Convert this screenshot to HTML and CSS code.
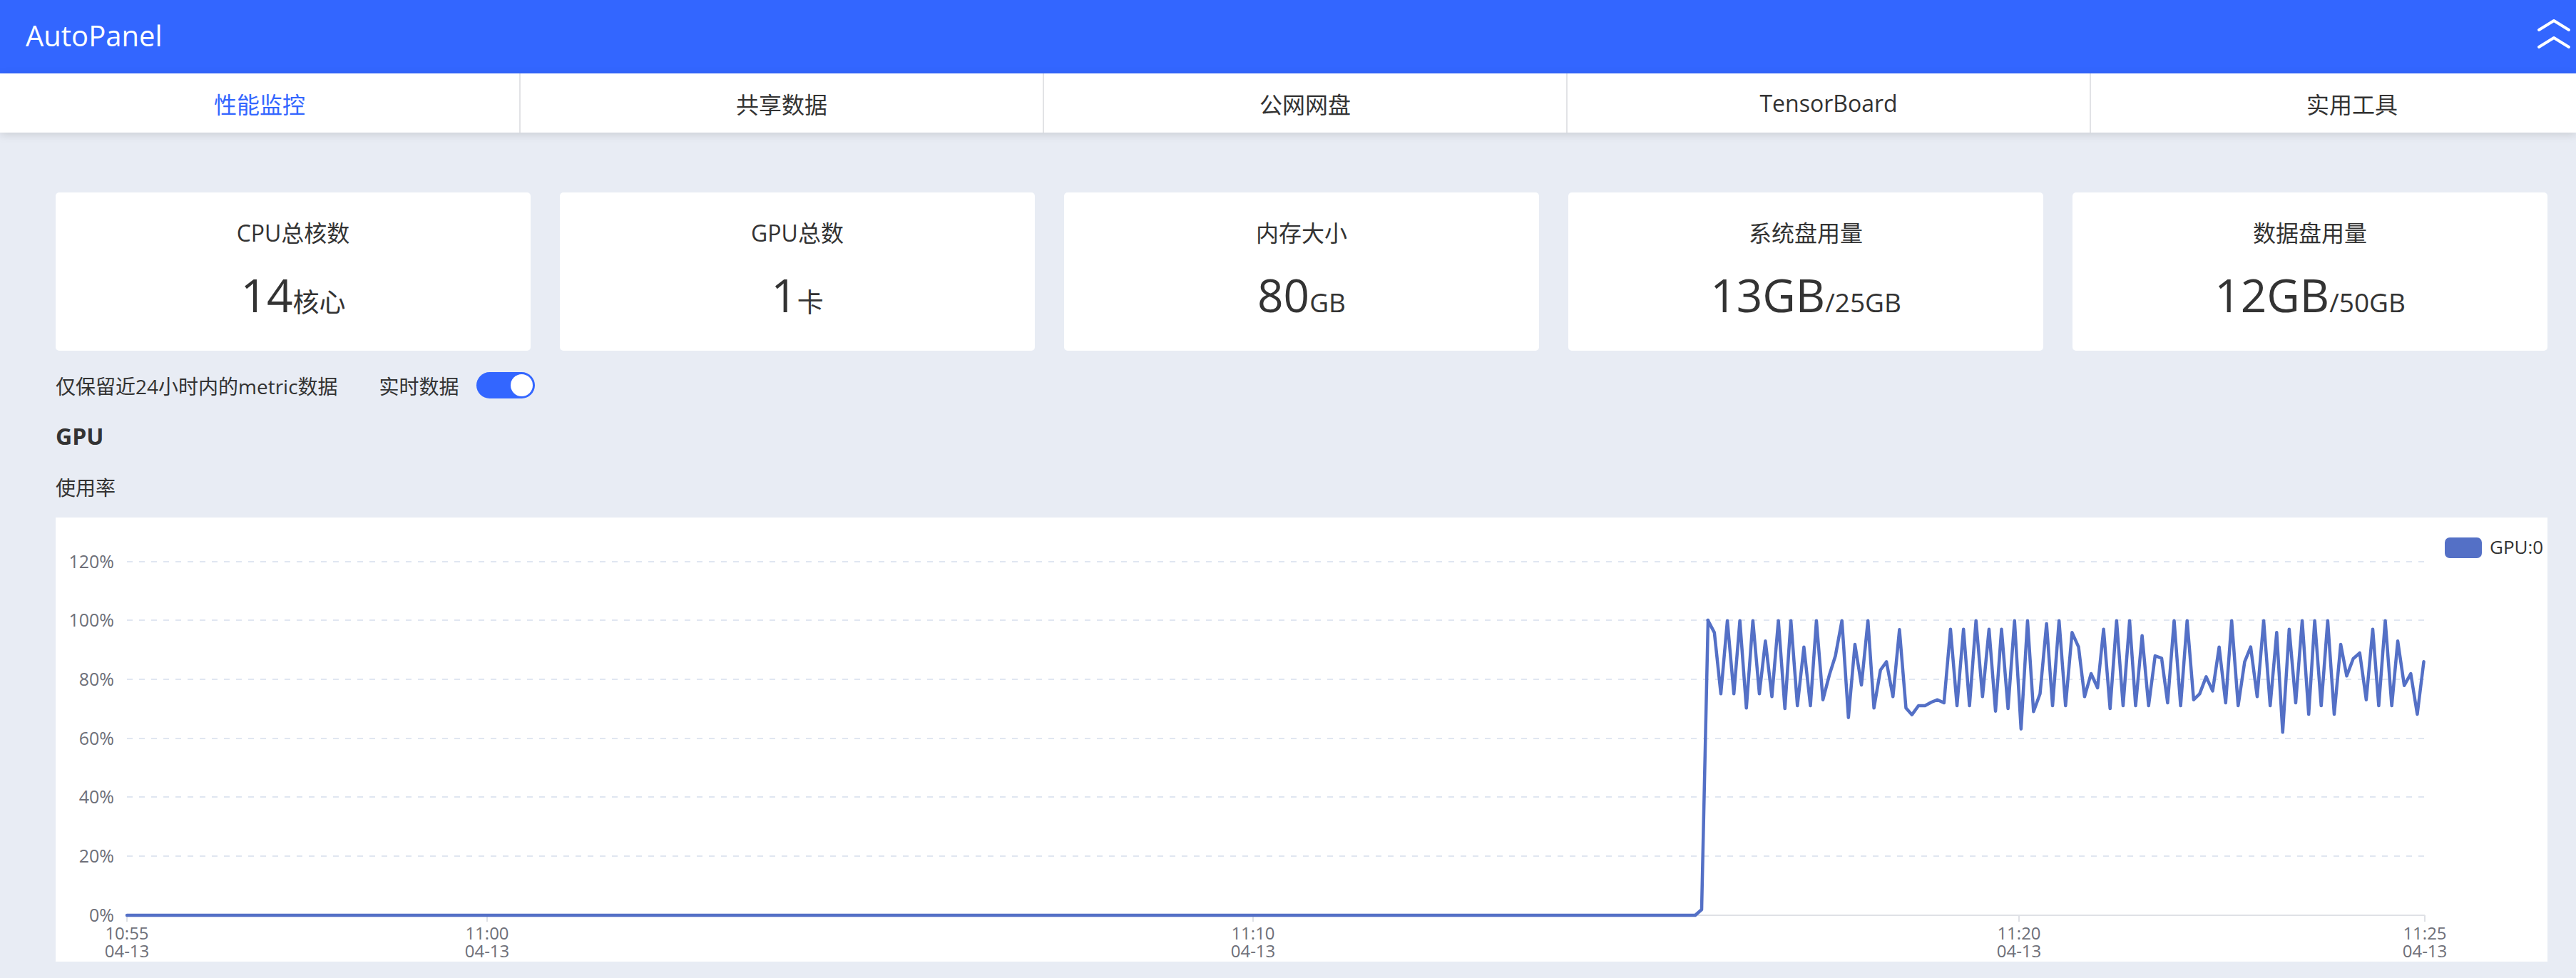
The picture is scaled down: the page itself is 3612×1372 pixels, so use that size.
FILE: index.html
```html
<!DOCTYPE html>
<html lang="zh">
<head>
<meta charset="utf-8">
<title>AutoPanel</title>
<link rel="stylesheet" href="styles.css">
</head>
<body>
<header class="topbar">
  <div class="brand">AutoPanel</div>
  <svg class="collapse" width="56" height="103" viewBox="3556 0 56 103">
    <polyline points="3560,42 3581,29 3602,42" fill="none" stroke="#fff" stroke-width="4" stroke-linecap="round" stroke-linejoin="round"/>
    <polyline points="3560,66 3581,53 3602,66" fill="none" stroke="#fff" stroke-width="4" stroke-linecap="round" stroke-linejoin="round"/>
  </svg>
</header>
<nav class="tabs">
  <div class="tab tab-first active">性能监控</div>
  <div class="tab">共享数据</div>
  <div class="tab">公网网盘</div>
  <div class="tab">TensorBoard</div>
  <div class="tab">实用工具</div>
</nav>
<main class="main">
  <section class="cards">
    <div class="card"><div class="card-title">CPU总核数</div><div class="card-value">14<span class="unit">核心</span></div></div>
    <div class="card"><div class="card-title">GPU总数</div><div class="card-value">1<span class="unit">卡</span></div></div>
    <div class="card"><div class="card-title">内存大小</div><div class="card-value">80<span class="unit">GB</span></div></div>
    <div class="card"><div class="card-title">系统盘用量</div><div class="card-value">13GB<span class="unit">/25GB</span></div></div>
    <div class="card"><div class="card-title">数据盘用量</div><div class="card-value">12GB<span class="unit">/50GB</span></div></div>
  </section>
  <div class="controls">
    <span class="note">仅保留近24小时内的metric数据</span>
    <span class="live-label">实时数据</span>
    <span class="switch"><span class="knob"></span></span>
  </div>
  <h2 class="section-title">GPU</h2>
  <div class="sub-title">使用率</div>
  <div class="chart">
    <svg width="3494" height="623" viewBox="78 726 3494 623">
      <g class="grid">
        <line x1="178" y1="788" x2="3400" y2="788"/>
        <line x1="178" y1="870" x2="3400" y2="870"/>
        <line x1="178" y1="953" x2="3400" y2="953"/>
        <line x1="178" y1="1036" x2="3400" y2="1036"/>
        <line x1="178" y1="1118" x2="3400" y2="1118"/>
        <line x1="178" y1="1201" x2="3400" y2="1201"/>
      </g>
      <g class="axis">
        <line x1="178" y1="1284" x2="3400" y2="1284"/>
        <line x1="178" y1="1284" x2="178" y2="1293"/>
        <line x1="683" y1="1284" x2="683" y2="1293"/>
        <line x1="1757" y1="1284" x2="1757" y2="1293"/>
        <line x1="2831" y1="1284" x2="2831" y2="1293"/>
        <line x1="3400" y1="1284" x2="3400" y2="1293"/>
      </g>
      <g class="ylabels">
        <text x="160" y="797">120%</text>
        <text x="160" y="879">100%</text>
        <text x="160" y="962">80%</text>
        <text x="160" y="1045">60%</text>
        <text x="160" y="1127">40%</text>
        <text x="160" y="1210">20%</text>
        <text x="160" y="1293">0%</text>
      </g>
      <polyline class="series" points="178,1284 2377,1284 2386,1276 2395,870"/>
      <polyline class="series" transform="matrix(0.7015 0 0 0.33333 2300 800)" points="135,210 148,262 161,520 174,212 187,520 199,212 212,580 225,212 238,520 250,298 263,532 276,212 289,582 301,212 314,570 327,323 340,570 352,212 365,545 378,440 390,360 403,212 416,620 429,312 442,483 455,212 467,580 480,420 492,385 505,532 518,250 531,580 543,608 556,570 569,570 582,555 594,545 607,558 620,248 633,570 646,248 658,570 671,212 684,532 697,248 710,593 722,248 735,582 748,212 761,668 774,212 786,595 799,520 812,225 824,570 837,212 850,570 863,262 876,323 888,532 901,435 914,495 926,248 939,582 952,212 965,570 978,212 990,570 1003,275 1016,570 1029,360 1042,370 1054,558 1067,212 1080,570 1093,212 1106,545 1118,520 1131,448 1144,508 1157,323 1170,558 1182,212 1195,570 1208,385 1220,323 1233,532 1246,212 1259,570 1272,262 1284,682 1297,248 1310,558 1323,212 1336,606 1348,212 1361,570 1374,212 1387,606 1400,312 1412,445 1425,372 1438,348 1451,545 1464,248 1476,570 1489,212 1502,570 1514,298 1527,485 1540,435 1553,606 1566,385"/>
      <rect class="legend-key" x="3428" y="754" width="52" height="29" rx="7"/>
      <text class="legend-text" x="3491" y="777">GPU:0</text>
    </svg>
    <div class="xlabel" style="left: 100px">10:55
04-13</div>
    <div class="xlabel" style="left: 605px">11:00
04-13</div>
    <div class="xlabel" style="left: 1679px">11:10
04-13</div>
    <div class="xlabel" style="left: 2753px">11:20
04-13</div>
    <div class="xlabel" style="left: 3322px">11:25
04-13</div>
  </div>
</main>
</body>
</html>
```

FILE: styles.css
```css
html, body {
  margin: 0;
  padding: 0;
  overflow: hidden;
}

body {
  width: 3612px;
  height: 1372px;
  background: #e8ecf4;
  font-family: "Open Sans", "Noto Sans CJK SC", sans-serif;
  color: #333;
}

.topbar {
  height: 103px;
  background: #3366ff;
  display: flex;
  align-items: center;
  justify-content: space-between;
  padding-left: 36px;
}

.brand {
  color: #fff;
  font-size: 40px;
  line-height: 1;
  margin-top: -4px;
}

.collapse {
  display: block;
  flex: 0 0 auto;
}

.tabs {
  position: relative;
  height: 83px;
  background: #fff;
  display: flex;
  overflow: hidden;
  box-shadow: 0 3px 12px rgba(0, 0, 0, 0.13);
}

.tab {
  flex: 0 0 734px;
  box-sizing: border-box;
  border-left: 2px solid #e2e3e6;
  display: flex;
  align-items: center;
  justify-content: center;
  font-size: 32px;
  color: #333;
}

.tab-first {
  flex-basis: 728px;
  border-left: none;
}

.tab.active {
  color: #3366ff;
}

.main {
  padding: 84px 40px 0 78px;
}

.cards {
  display: grid;
  grid-template-columns: repeat(5, 1fr);
  gap: 41px;
}

.card {
  height: 222px;
  background: #fff;
  border-radius: 5px;
  display: flex;
  flex-direction: column;
  align-items: center;
  box-sizing: border-box;
  padding-top: 35px;
}

.card-title {
  font-size: 32px;
  line-height: 44px;
  height: 44px;
  color: #333;
}

.card-value {
  margin-top: 25px;
  font-size: 64px;
  line-height: 80px;
  height: 80px;
  color: #333;
}

.unit {
  font-size: 37px;
  line-height: 1;
}

.controls {
  margin-top: 30px;
  height: 37px;
  display: flex;
  align-items: center;
  font-size: 28px;
  color: #333;
}

.note {
  margin-right: 58px;
}

.live-label {
  margin-right: 24px;
}

.switch {
  width: 82px;
  height: 37px;
  border-radius: 19px;
  background: #3366ff;
  display: flex;
  align-items: center;
  justify-content: flex-end;
  padding-right: 3px;
  box-sizing: border-box;
}

.knob {
  width: 31px;
  height: 31px;
  border-radius: 50%;
  background: #fff;
}

.section-title {
  margin: 33px 0 0;
  font-size: 32px;
  line-height: 40px;
  font-weight: 700;
  color: #333;
}

.sub-title {
  margin-top: 32px;
  font-size: 28px;
  line-height: 40px;
  color: #333;
}

.chart {
  position: relative;
  margin-top: 22px;
  height: 623px;
  background: #fff;
}

.chart svg {
  display: block;
}

.xlabel {
  position: absolute;
  top: 570px;
  width: 0;
  display: flex;
  justify-content: center;
  white-space: pre;
  text-align: center;
  font-family: "Open Sans", sans-serif;
  font-size: 24px;
  line-height: 25px;
  color: #6e7079;
}

.grid line {
  stroke: #e0e6f1;
  stroke-width: 2;
  stroke-dasharray: 8 9;
}

.axis line {
  stroke: #dfe1e6;
  stroke-width: 2;
}

.ylabels text {
  font-family: "Open Sans", sans-serif;
  font-size: 25px;
  fill: #6e7079;
  text-anchor: end;
}

.series {
  fill: none;
  stroke: #5470c6;
  stroke-width: 4.5;
  stroke-linejoin: round;
  stroke-linecap: round;
  vector-effect: non-scaling-stroke;
}

.legend-key {
  fill: #5470c6;
}

.legend-text {
  font-family: "Open Sans", sans-serif;
  font-size: 26px;
  fill: #333;
}
```
